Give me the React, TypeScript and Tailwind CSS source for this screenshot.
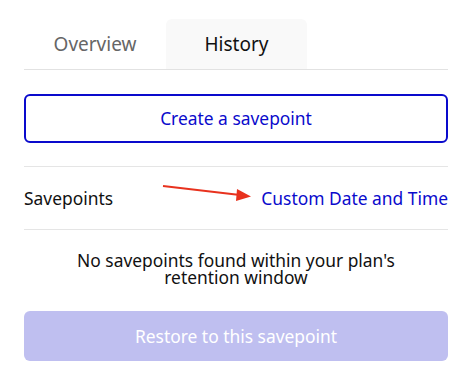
import React from "react";

export default function App() {
  return (
    <div
      className="w-[472px] h-[375px] bg-white px-[24px] pt-[19px] text-black"
      style={{ fontFamily: '"Noto Sans", "Open Sans", sans-serif' }}
    >
      <div className="flex border-b border-[#e2e2e2]">
        <div className="w-[142px] h-[50px] flex items-center justify-center text-[19px] text-[#666666]">
          Overview
        </div>
        <div className="w-[141px] h-[50px] flex items-center justify-center text-[19px] text-[#111111] bg-[#f9f9f9] rounded-t-[6px]">
          History
        </div>
      </div>

      <button className="mt-[24px] w-full h-[49px] rounded-[6px] border-2 border-[#0a0acc] text-[#0a0acc] text-[17.4px] flex items-center justify-center">
        Create a savepoint
      </button>

      <div className="mt-[23px] border-t border-[#e5e5e5]" />
      <div className="relative h-[62px] flex items-center justify-between text-[17.4px]">
        <span className="text-[#111111]">Savepoints</span>
        <span className="text-[#0a0acc]">Custom Date and Time</span>
        <svg
          className="absolute left-[138px] top-[16px]"
          width="92"
          height="20"
          viewBox="0 0 92 20"
        >
          <line x1="1" y1="3" x2="78" y2="12" stroke="#e8321e" strokeWidth="2" />
          <polygon points="89,13.5 75,6 74,18" fill="#e8321e" />
        </svg>
      </div>
      <div className="border-t border-[#e5e5e5]" />

      <div className="mt-[22px] text-center text-[17.4px] leading-[17px] text-[#111111]">
        No savepoints found within your plan's
        <br />
        retention window
      </div>

      <button className="mt-[25px] w-full h-[50px] rounded-[6px] bg-[#bfbff0] text-white text-[17.4px] flex items-center justify-center">
        Restore to this savepoint
      </button>
    </div>
  );
}
